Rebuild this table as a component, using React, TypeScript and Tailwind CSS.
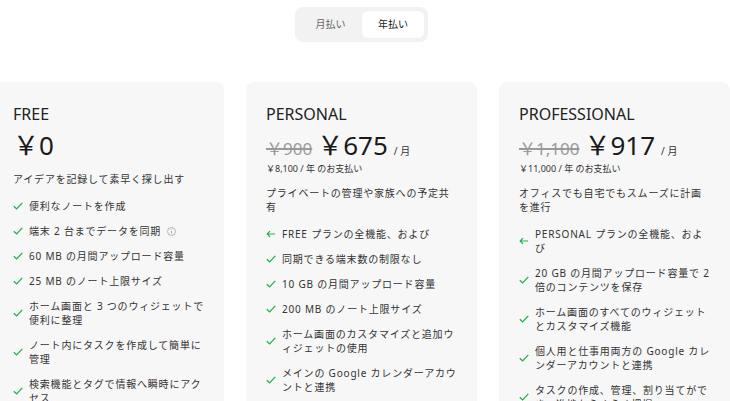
import { ReactNode } from "react";

type Feature = { text: ReactNode; arrow?: boolean };

type Plan = {
  name: string;
  oldPrice?: string;
  price: string;
  yearly?: string;
  description: string;
  features: Feature[];
};

const PLANS: Plan[] = [
  {
    name: "FREE",
    price: "￥0",
    description: "アイデアを記録して素早く探し出す",
    features: [
      { text: "便利なノートを作成" },
      {
        text: (
          <>
            端末 2 台までデータを同期 <InfoIcon />
          </>
        ),
      },
      { text: "60 MB の月間アップロード容量" },
      { text: "25 MB のノート上限サイズ" },
      { text: "ホーム画面と 3 つのウィジェットで便利に整理" },
      { text: "ノート内にタスクを作成して簡単に管理" },
      { text: "検索機能とタグで情報へ瞬時にアクセス" },
    ],
  },
  {
    name: "PERSONAL",
    oldPrice: "￥900",
    price: "￥675",
    yearly: "￥8,100 / 年 のお支払い",
    description: "プライベートの管理や家族への予定共有",
    features: [
      { text: "FREE プランの全機能、および", arrow: true },
      { text: "同期できる端末数の制限なし" },
      { text: "10 GB の月間アップロード容量" },
      { text: "200 MB のノート上限サイズ" },
      { text: "ホーム画面のカスタマイズと追加ウィジェットの使用" },
      { text: "メインの Google カレンダーアカウントと連携" },
    ],
  },
  {
    name: "PROFESSIONAL",
    oldPrice: "￥1,100",
    price: "￥917",
    yearly: "￥11,000 / 年 のお支払い",
    description: "オフィスでも自宅でもスムーズに計画を進行",
    features: [
      { text: "PERSONAL プランの全機能、および", arrow: true },
      { text: "20 GB の月間アップロード容量で 2 倍のコンテンツを保存" },
      { text: "ホーム画面のすべてのウィジェットとカスタマイズ機能" },
      { text: "個人用と仕事用両方の Google カレンダーアカウントと連携" },
      { text: "タスクの作成、管理、割り当てができ、進捗もらくらく把握" },
    ],
  },
];

function InfoIcon() {
  return (
    <svg width="9" height="9" viewBox="0 0 10 10" className="ml-[2px] inline-block align-[-1px]">
      <circle cx="5" cy="5" r="4.4" fill="none" stroke="#9a9a9a" strokeWidth="0.8" />
      <path d="M5 4.3V7.4M5 2.6V3.3" stroke="#9a9a9a" strokeWidth="0.9" />
    </svg>
  );
}

function CheckIcon() {
  return (
    <svg width="10" height="8" viewBox="0 0 10 8" className="shrink-0">
      <path d="M0.8 4.2L3.6 6.9L9.3 0.9" fill="none" stroke="#1eb14b" strokeWidth="1.3" />
    </svg>
  );
}

function ArrowIcon() {
  return (
    <svg width="10" height="8" viewBox="0 0 10 8" className="shrink-0">
      <path d="M9 4H1.2M4 1.2L1.2 4L4 6.8" fill="none" stroke="#1eb14b" strokeWidth="1.2" />
    </svg>
  );
}

function PlanCard({ plan }: { plan: Plan }) {
  return (
    <div className="h-[340px] w-[231px] shrink-0 rounded-[8px] bg-[#f7f7f7] pl-[20px] pr-[18px] pt-[22px]">
      <h3 className="text-[16px] leading-[20px] text-[#222]">{plan.name}</h3>

      <div className="mt-[5px] flex h-[32px] items-baseline">
        {plan.oldPrice ? (
          <span className="mr-[5px] text-[17px] text-[#9a9a9a] line-through decoration-[1.5px]">
            {plan.oldPrice}
          </span>
        ) : null}
        <span className="text-[26px] leading-[32px] text-[#1a1a1a]">{plan.price}</span>
        {plan.oldPrice ? (
          <span className="ml-[6px] text-[10px] text-[#333]">/ 月</span>
        ) : null}
      </div>

      {plan.yearly ? (
        <p className="mt-[2px] text-[9px] leading-[12px] text-[#333]">{plan.yearly}</p>
      ) : null}

      <p className="mt-[11px] text-[10px] leading-[14px] tracking-[0.8px] text-[#333]">
        {plan.description}
      </p>

      <ul className="mt-[13px] flex flex-col gap-[11px]">
        {plan.features.map((feature, idx) => (
          <li key={idx} className="flex items-center gap-[6px]">
            {feature.arrow ? <ArrowIcon /> : <CheckIcon />}
            <span className="text-[10px] leading-[14px] tracking-[0.8px] text-[#333]">
              {feature.text}
            </span>
          </li>
        ))}
      </ul>
    </div>
  );
}

export default function App() {
  return (
    <div
      className="h-[401px] w-[730px] overflow-hidden bg-white"
      style={{ fontFamily: '"Noto Sans", "Noto Sans CJK JP", sans-serif' }}
    >
      <div className="ml-[-7px] w-[737px]">
        <div className="flex justify-center pt-[7px]">
          <div className="flex rounded-[8px] bg-[#f2f2f2] p-[4px]">
            <button className="h-[27px] w-[63px] text-[10px] text-[#666]">月払い</button>
            <button className="h-[27px] w-[62px] rounded-[6px] bg-white text-[10px] text-[#222]">
              年払い
            </button>
          </div>
        </div>

        <div className="mt-[40px] flex gap-[22px]">
          {PLANS.map((plan) => (
            <PlanCard key={plan.name} plan={plan} />
          ))}
        </div>
      </div>
    </div>
  );
}
